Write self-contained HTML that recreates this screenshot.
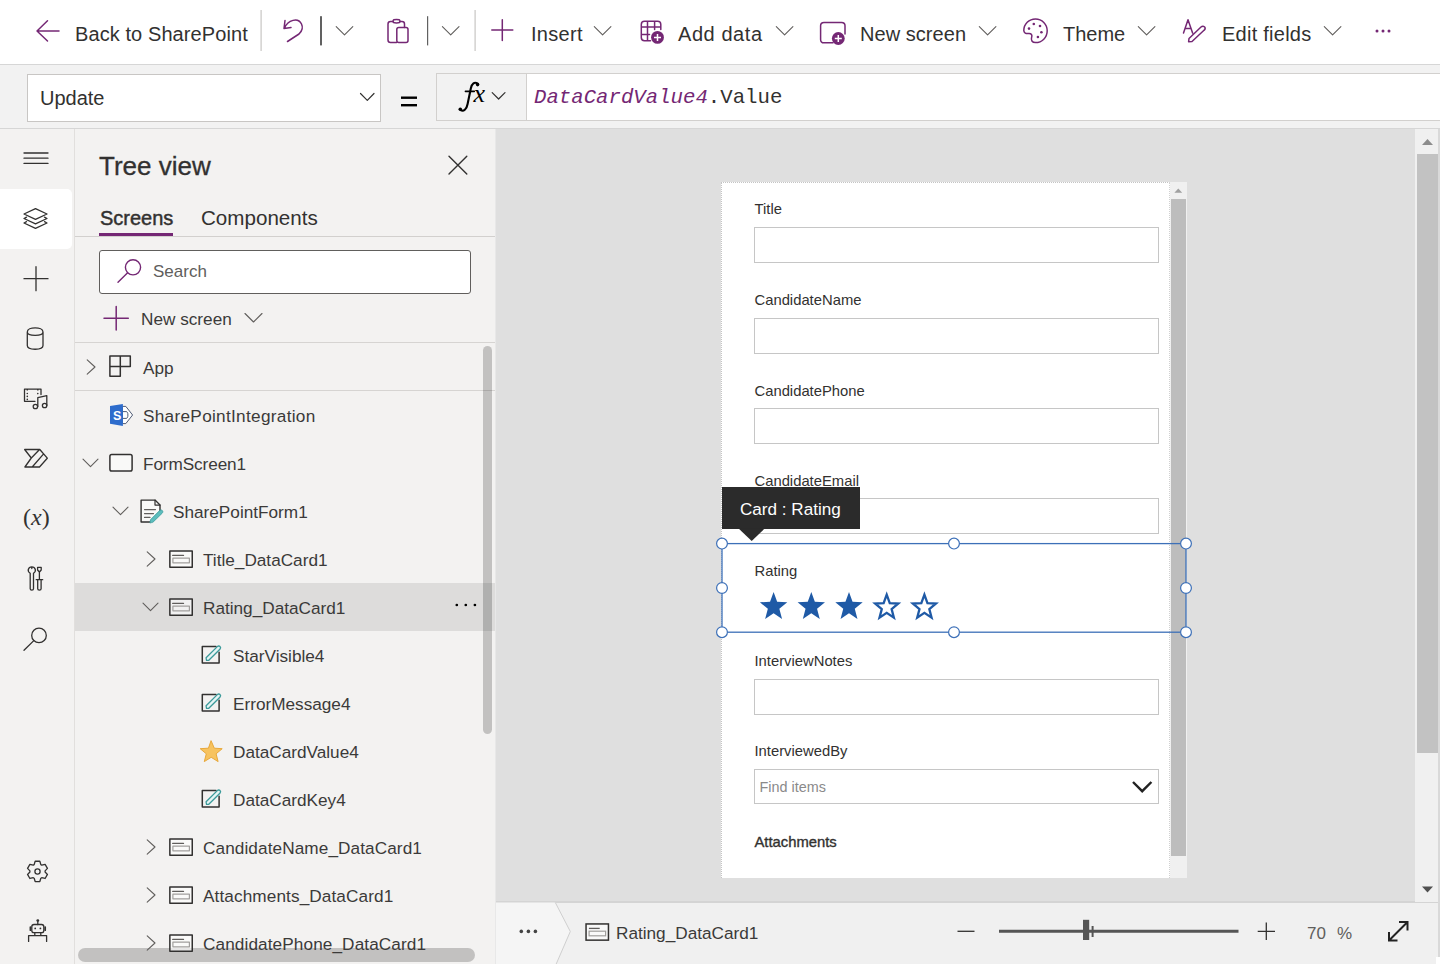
<!DOCTYPE html>
<html><head><meta charset="utf-8"><title>Power Apps</title>
<style>
*{box-sizing:border-box;margin:0;padding:0}
html,body{width:1440px;height:964px;overflow:hidden;background:#fff;font-family:"Liberation Sans",sans-serif;color:#323130}
.a{position:absolute}
.t{position:absolute;white-space:nowrap;line-height:1}
svg{position:absolute;overflow:visible}
.tb{font-size:20px;color:#323130}
.tree{font-size:17.2px;color:#3b3a39}
.lbl{font-size:14.8px;color:#323130}
.inp{position:absolute;left:754px;width:405px;height:36px;border:1px solid #c6c6c6;background:#fff}
</style></head><body>
<div class="a" style="left:0;top:0;width:1440px;height:64px;background:#fff"></div>
<div class="a" style="left:0;top:64px;width:1440px;height:1px;background:#d6d6d6"></div>
<div class="a" style="left:0;top:65px;width:1440px;height:63px;background:#f2f2f2"></div>
<div class="a" style="left:0;top:128px;width:1440px;height:1px;background:#d6d6d6"></div>
<div class="a" style="left:0;top:129px;width:75px;height:835px;background:#f3f2f1"></div>
<div class="a" style="left:74px;top:129px;width:1px;height:835px;background:#e1dfdd"></div>
<div class="a" style="left:75px;top:129px;width:420px;height:835px;background:#f3f2f1"></div>
<div class="a" style="left:495px;top:129px;width:1px;height:835px;background:#e8e8e8"></div>
<div class="a" style="left:496px;top:129px;width:944px;height:773px;background:#dfdfdf"></div>
<div class="a" style="left:496px;top:902px;width:944px;height:62px;background:#f0f0f0"></div>
<div class="a" style="left:496px;top:901px;width:944px;height:1.5px;background:#d4d4d4"></div>
<svg style="left:0;top:0" width="1440" height="64" fill="none" stroke-linecap="round" stroke-linejoin="round">
  <g stroke="#742774" stroke-width="1.5">
    <path d="M37 31 H59 M37 31 L47.5 20.8 M37 31 L47.5 41"/>
    <path d="M284 28.5 L285 20.5 M284 28.5 L291 27.5 M284.5 28 C288 20 298 17 301.5 24 C303.5 28 302 31 299 34 L287.5 41.5"/>
    <path d="M393 21.5 C393 19.5 394 19.5 396.5 19.5 C399 19.5 400 19.5 400 21.5 C400 23 399 23 396.5 23 C394 23 393 23 393 21.5 Z"/>
    <path d="M393 21.5 H390.5 C389 21.5 388 22.5 388 24 V40 C388 41.5 389 42.5 390.5 42.5 H396.5 M400 21.5 H402 C403.5 21.5 404.5 22.5 404.5 24 V27.5"/>
    <rect x="396.8" y="27.5" width="11.2" height="15" rx="2"/>
    <path d="M491.8 30 H512.8 M502.3 19.7 V40.5"/>
    <path d="M650.5 40.8 H644.5 C642.5 40.8 641.3 39.6 641.3 37.6 V24.4 C641.3 22.4 642.5 21.2 644.5 21.2 H657.6 C659.6 21.2 660.8 22.4 660.8 24.4 V29.5 M641.3 27 H660.8 M641.3 34.5 H649.5 M647.5 21.2 V40.8 M654.6 21.2 V29.5"/>
    <path d="M833 42.8 H824 C821.8 42.8 820.6 41.6 820.6 39.4 V25.8 C820.6 23.6 821.8 22.4 824 22.4 H841.6 C843.8 22.4 845 23.6 845 25.8 V34"/>
    <path d="M1035.5 19 C1029 19 1023.8 24 1023.8 30.6 C1023.8 33 1026 33.8 1028.4 33.5 C1031.5 33.2 1032.5 35 1031.6 37.6 C1030.8 40 1032 42.6 1035.5 42.6 C1042 42.6 1047.2 37.4 1047.2 30.8 C1047.2 24.2 1042 19 1035.5 19 Z"/>
    <path d="M1183.5 33 L1188 19.8 L1192.6 33 M1185.2 28.4 H1191 M1201 27 C1202.3 25.8 1204 26 1204.8 27.2 C1205.5 28.3 1205 29.5 1204 30.3 L1192 41.5 L1188.6 41.8 L1189 38.5 Z"/>
  </g>
  <g fill="#742774" stroke="none">
    <circle cx="657.5" cy="37.4" r="6.4"/>
    <circle cx="838.3" cy="38.5" r="6.4"/>
    <circle cx="1029" cy="28.6" r="1.3"/><circle cx="1033.8" cy="24" r="1.3"/><circle cx="1040" cy="26" r="1.3"/><circle cx="1041.4" cy="32.2" r="1.3"/><circle cx="1037.9" cy="37" r="1.3"/>
    <circle cx="1377" cy="31" r="1.5"/><circle cx="1383" cy="31" r="1.5"/><circle cx="1389" cy="31" r="1.5"/>
  </g>
  <g stroke="#fff" stroke-width="1.5" stroke-linecap="butt">
    <path d="M654 37.4 H661 M657.5 33.9 V40.9"/>
    <path d="M834.8 38.5 H841.8 M838.3 35 V42"/>
  </g>
  <g stroke="#605e5c" stroke-width="1.1">
    <path d="M336.2 26.6 L344.5 34.8 L352.8 26.6"/>
    <path d="M442.4 26.6 L450.7 34.8 L459 26.6"/>
    <path d="M594.3 26.6 L602.6 34.8 L610.9 26.6"/>
    <path d="M776.3 26.6 L784.6 34.8 L792.9 26.6"/>
    <path d="M979.3 26.6 L987.6 34.8 L995.9 26.6"/>
    <path d="M1138.3 26.6 L1146.6 34.8 L1154.9 26.6"/>
    <path d="M1324.3 26.6 L1332.6 34.8 L1340.9 26.6"/>
  </g>
  <rect x="260.5" y="10" width="1.2" height="41" fill="#c8c6c4" stroke="none"/>
  <rect x="320" y="16.2" width="2" height="29.2" fill="#616161" stroke="none"/>
  <rect x="427" y="16.2" width="1.2" height="29.2" fill="#616161" stroke="none"/>
  <rect x="474.5" y="10" width="1.2" height="41" fill="#c8c6c4" stroke="none"/>
</svg>
<div class="t tb" style="left:75px;top:23.5px;letter-spacing:0.09px">Back to SharePoint</div>
<div class="t tb" style="left:531px;top:23.5px;letter-spacing:0.3px">Insert</div>
<div class="t tb" style="left:678px;top:23.5px;letter-spacing:0.57px">Add data</div>
<div class="t tb" style="left:860px;top:23.5px;letter-spacing:0.05px">New screen</div>
<div class="t tb" style="left:1063px;top:23.5px;letter-spacing:0px">Theme</div>
<div class="t tb" style="left:1222px;top:23.5px;letter-spacing:0.25px">Edit fields</div>
<div class="a" style="left:27px;top:74px;width:354px;height:48px;background:#fff;border:1px solid #c8c6c4"></div>
<div class="t" style="left:40px;top:87.5px;font-size:20px;color:#323130">Update</div>
<svg style="left:0;top:65px" width="1440" height="63" fill="none" stroke-linecap="round" stroke-linejoin="round">
  <path d="M360.5 28.5 L367.3 35.3 L374 28.5" stroke="#323130" stroke-width="1.2"/>
  <rect x="401" y="31.5" width="16" height="2.4" fill="#000"/>
  <rect x="401" y="39" width="16" height="2.4" fill="#000"/>
</svg>
<div class="a" style="left:436px;top:73px;width:91px;height:48px;background:#f2f2f2;border:1px solid #d2d0ce"></div>
<div class="a" style="left:526px;top:73px;width:914px;height:48px;background:#fff;border:1px solid #d2d0ce;border-right:none"></div>
<svg style="left:0;top:0" width="1440" height="130" fill="none" stroke-linecap="round"><path d="M477.8 83.6 C474.5 81.6 471.8 83.2 470.8 88.5 L467.6 104 C466.6 109.5 463.5 111.8 460.6 110.2" stroke="#000" stroke-width="2.1"/><circle cx="477.6" cy="84.6" r="1.8" fill="#000"/><circle cx="460.3" cy="109.2" r="1.8" fill="#000"/><path d="M465.4 91.4 H474.3" stroke="#000" stroke-width="1.6"/><path d="M492.2 92.6 L498.6 99 L505 92.6" stroke="#323130" stroke-width="1.2" stroke-linejoin="round"/></svg>
<div class="t" style="left:473.5px;top:80.6px;font-family:'Liberation Serif',serif;font-style:italic;font-size:26px;color:#000">x</div>
<div class="t" style="left:534px;top:88px;font-family:'Liberation Mono',monospace;font-size:20.7px;color:#323130"><i style="color:#742774">DataCardValue4</i>.Value</div>
<div class="a" style="left:0;top:189px;width:72px;height:60px;background:#fff;border-radius:0 5px 5px 0"></div>
<svg style="left:0;top:0" width="75" height="964" fill="none" stroke="#323130" stroke-width="1.3" stroke-linecap="round" stroke-linejoin="round">
  <path d="M24 153 H48 M24 158.2 H48 M24 163.4 H48"/>
  <path d="M35.5 208.7 L47 214 L35.5 219.3 L24 214 Z"/>
  <path d="M26.5 217.2 L24 218.5 L35.5 223.8 L47 218.5 L44.5 217.2"/>
  <path d="M26.5 221.7 L24 223 L35.5 228.3 L47 223 L44.5 221.7"/>
  <path d="M24 278.7 H48 M36 266.7 V290.7"/>
  <path d="M27.3 332 C27.3 326.5 43 326.5 43 332 V345.5 C43 350.5 27.3 350.5 27.3 345.5 Z M27.3 332 C27.3 336.5 43 336.5 43 332"/>
  <path d="M35 401.3 H24.5 V389.1 H41 V394.5"/>
  <path d="M37.8 406.4 V397.6 L46.8 395.6 V405.5"/>
  <circle cx="35.4" cy="406.5" r="2.2"/><circle cx="44.6" cy="405.5" r="2.2"/>
  <g fill="#323130" stroke="none"><circle cx="27.3" cy="393.5" r="0.8"/><circle cx="27.3" cy="396.4" r="0.8"/><circle cx="27.3" cy="399.4" r="0.8"/><circle cx="37.8" cy="393.6" r="0.8"/><rect x="26.6" y="389" width="1.4" height="1.5"/><rect x="37.1" y="389" width="1.4" height="1.5"/></g>
  <path d="M24.65 449.5 H39.8 L47.3 458.2 L39.5 467 H24.9 L31.3 458 Z M31.3 458 L39.3 449.7 M32.2 467 L43.2 454.4"/>
  <path d="M30.2 573.3 C28.5 572.3 28 570.8 28.3 569.5 C28.8 567.6 30.3 566.8 31.8 566.8 C33.3 566.8 34.8 567.6 35.3 569.5 C35.6 570.8 35.1 572.3 33.5 573.3 V588.7 C33.5 590.6 30.2 590.6 30.2 588.7 Z M31.8 567 V568.6"/>
  <path d="M37.6 567.3 H41.2 V570 L39.9 571.5 H38.9 L37.6 570 Z M39.4 571.6 V579.6 M36.2 579.7 H42.7 M37.7 579.7 V588.7 C37.7 590.6 41.1 590.6 41.1 588.7 V579.7"/>
  <circle cx="39" cy="635.4" r="7.3"/>
  <path d="M33.8 640.6 L24 650.2"/>
  <path d="M34.17 864.57 L35.16 861.27 L39.84 861.27 L40.83 864.57 A7.6 7.6 0 0 1 41.75 865.10 L45.11 864.31 L47.45 868.36 L45.08 870.87 A7.6 7.6 0 0 1 45.08 871.93 L47.45 874.44 L45.11 878.49 L41.75 877.70 A7.6 7.6 0 0 1 40.83 878.23 L39.84 881.53 L35.16 881.53 L34.17 878.23 A7.6 7.6 0 0 1 33.25 877.70 L29.89 878.49 L27.55 874.44 L29.92 871.93 A7.6 7.6 0 0 1 29.92 870.87 L27.55 868.36 L29.89 864.31 L33.25 865.10 A7.6 7.6 0 0 1 34.17 864.57 Z"/>
  <circle cx="37.5" cy="871.5" r="2.6"/>
  <rect x="31.8" y="924.5" width="12" height="8.2" rx="2.2"/>
  <path d="M37.8 924.5 V921.6 M34.8 932.7 V935.6 M40.8 932.7 V935.6 M28.6 941.4 V935.6 H46.6 V941.4"/>
  <path d="M30.4 927 V930.2 M45.2 927 V930.2" stroke-width="1.7"/>
  <g fill="#323130" stroke="none"><circle cx="37.8" cy="920.6" r="1.4"/><circle cx="35.2" cy="928.4" r="0.9"/><circle cx="40.4" cy="928.4" r="0.9"/></g>
</svg>
<div class="t" style="left:23px;top:505px;font-family:'Liberation Serif',serif;font-size:24px;color:#323130">(<i>x</i>)</div>
<div class="t" style="left:99px;top:153.3px;font-size:26px;color:#323130;-webkit-text-stroke:0.3px #323130">Tree view</div>
<svg style="left:0;top:0" width="500" height="964" fill="none" stroke-linecap="round" stroke-linejoin="round">
  <path d="M449 156.3 L466.8 174 M466.8 156.3 L449 174" stroke="#323130" stroke-width="1.4"/>
</svg>
<div class="t" style="left:100px;top:208px;font-size:20px;color:#323130;-webkit-text-stroke:0.45px #323130">Screens</div>
<div class="t" style="left:201px;top:208px;font-size:20.6px;color:#323130">Components</div>
<div class="a" style="left:99px;top:232.7px;width:74px;height:3px;background:#742774"></div>
<div class="a" style="left:75px;top:236px;width:420px;height:1px;background:#d2d0ce"></div>
<div class="a" style="left:99px;top:249.5px;width:372px;height:44px;background:#fff;border:1px solid #605e5c;border-radius:3px"></div>
<div class="t" style="left:153px;top:263px;font-size:17px;color:#605e5c">Search</div>
<div class="t tree" style="left:141px;top:311px">New screen</div>
<div class="a" style="left:75px;top:342px;width:420px;height:1px;background:#d6d4d2"></div>
<div class="a" style="left:75px;top:390px;width:420px;height:1px;background:#d6d4d2"></div>
<div class="a" style="left:75px;top:583px;width:420px;height:48px;background:#dddcdb"></div>
<div class="a" style="left:483px;top:346px;width:9px;height:388px;background:rgba(0,0,0,0.2);border-radius:5px"></div>
<div class="a" style="left:78px;top:948px;width:397px;height:14px;background:rgba(0,0,0,0.2);border-radius:7px"></div>
<div class="t tree" style="left:143px;top:359.8px;letter-spacing:0px">App</div>
<div class="t tree" style="left:143px;top:407.8px;letter-spacing:0.3px">SharePointIntegration</div>
<div class="t tree" style="left:143px;top:455.8px;letter-spacing:-0.1px">FormScreen1</div>
<div class="t tree" style="left:173px;top:503.8px;letter-spacing:0px">SharePointForm1</div>
<div class="t tree" style="left:203px;top:551.8px;letter-spacing:0px">Title_DataCard1</div>
<div class="t tree" style="left:203px;top:599.8px;letter-spacing:0px">Rating_DataCard1</div>
<div class="t tree" style="left:233px;top:647.8px;letter-spacing:0px">StarVisible4</div>
<div class="t tree" style="left:233px;top:695.8px;letter-spacing:0px">ErrorMessage4</div>
<div class="t tree" style="left:233px;top:743.8px;letter-spacing:0px">DataCardValue4</div>
<div class="t tree" style="left:233px;top:791.8px;letter-spacing:0px">DataCardKey4</div>
<div class="t tree" style="left:203px;top:839.8px;letter-spacing:0.09px">CandidateName_DataCard1</div>
<div class="t tree" style="left:203px;top:887.8px;letter-spacing:0.1px">Attachments_DataCard1</div>
<div class="t tree" style="left:203px;top:935.8px;letter-spacing:0.1px">CandidatePhone_DataCard1</div>
<svg style="left:0;top:0" width="500" height="964" fill="none" stroke-linecap="round" stroke-linejoin="round">
<circle cx="133" cy="267.3" r="7.6" stroke="#742774" stroke-width="1.4"/><path d="M127.6 272.7 L118 282.2" stroke="#742774" stroke-width="1.4"/>
<path d="M104 318.3 H128.3 M116.2 306.5 V330" stroke="#742774" stroke-width="1.5"/>
<path d="M245 313.5 L253.5 322 L262 313.5" stroke="#605e5c" stroke-width="1.1"/>
<path d="M87.2 359.8 L95.0 367 L87.2 374.2" stroke="#605e5c" stroke-width="1.1"/>
<path d="M83 459.2 L90.5 466.7 L98 459.2" stroke="#605e5c" stroke-width="1.1"/>
<path d="M113 507.2 L120.5 514.7 L128 507.2" stroke="#605e5c" stroke-width="1.1"/>
<path d="M147.2 551.8 L155.0 559 L147.2 566.2" stroke="#605e5c" stroke-width="1.1"/>
<path d="M143 603.2 L150.5 610.7 L158 603.2" stroke="#605e5c" stroke-width="1.1"/>
<path d="M147.2 839.8 L155.0 847 L147.2 854.2" stroke="#605e5c" stroke-width="1.1"/>
<path d="M147.2 887.8 L155.0 895 L147.2 902.2" stroke="#605e5c" stroke-width="1.1"/>
<path d="M147.2 935.8 L155.0 943 L147.2 950.2" stroke="#605e5c" stroke-width="1.1"/>
<path d="M109.9 356.1 H130.3 V366.5 H109.9 Z M120.3 356.1 V376.3 H109.9 V366.5" stroke="#323130" stroke-width="1.5"/>
<path d="M122.9 406.4 H125.8 L132.6 415 L125.8 423.6 H122.9 Z" stroke="#3c4a66" stroke-width="0.9" fill="#fff"/><path d="M122.9 411.6 H126 C127.5 411.6 127.9 413 127.9 415 C127.9 417 127.5 418.4 126 418.4 H122.9" stroke="#3c4a66" stroke-width="0.9"/>
<path d="M110 406.1 L122.9 404 V425.9 L110 423.8 Z" fill="#2d6ccc" stroke="none"/>
<text x="112.9" y="419.6" font-family="Liberation Sans" font-weight="bold" font-size="12.5" fill="#fff" stroke="none">S</text>
<rect x="109.9" y="454.6" width="22.2" height="16.5" rx="1.8" stroke="#323130" stroke-width="1.5" fill="#fff" fill-opacity="0.5"/>
<path d="M150 522 H141.1 V500.1 H155 L160 505.1 V511" stroke="#323130" stroke-width="1.4" fill="#fff" fill-opacity="0.5"/><path d="M155 500.1 V505.1 H160" stroke="#323130" stroke-width="1.2"/>
<path d="M144.5 509.6 H155.5 M144.5 513.6 H153.5 M144.5 517.4 H150" stroke="#605e5c" stroke-width="1.2"/>
<path d="M150 522.6 L150.6 519.6 L159.6 510.6 C160.4 509.8 161.6 509.8 162.3 510.5 C163 511.2 163 512.4 162.2 513.2 L153.2 522 Z" fill="#5cbdbd" stroke="#3a9c9c" stroke-width="0.8"/>
<rect x="169.85" y="550.95" width="22.4" height="16.2" stroke="#323130" stroke-width="1.5" fill="#fff" fill-opacity="0.6"/>
  <path d="M172.7 555.4000000000001 H183.5" stroke="#605e5c" stroke-width="1.3"/>
  <rect x="172.9" y="558.2" width="16.5" height="4.6" stroke="#a19f9d" stroke-width="1.2" fill="none"/>
<rect x="169.85" y="598.95" width="22.4" height="16.2" stroke="#323130" stroke-width="1.5" fill="#fff" fill-opacity="0.6"/>
  <path d="M172.7 603.4000000000001 H183.5" stroke="#605e5c" stroke-width="1.3"/>
  <rect x="172.9" y="606.2" width="16.5" height="4.6" stroke="#a19f9d" stroke-width="1.2" fill="none"/>
<rect x="169.85" y="838.95" width="22.4" height="16.2" stroke="#323130" stroke-width="1.5" fill="#fff" fill-opacity="0.6"/>
  <path d="M172.7 843.4000000000001 H183.5" stroke="#605e5c" stroke-width="1.3"/>
  <rect x="172.9" y="846.2" width="16.5" height="4.6" stroke="#a19f9d" stroke-width="1.2" fill="none"/>
<rect x="169.85" y="886.95" width="22.4" height="16.2" stroke="#323130" stroke-width="1.5" fill="#fff" fill-opacity="0.6"/>
  <path d="M172.7 891.4000000000001 H183.5" stroke="#605e5c" stroke-width="1.3"/>
  <rect x="172.9" y="894.2" width="16.5" height="4.6" stroke="#a19f9d" stroke-width="1.2" fill="none"/>
<rect x="169.85" y="934.95" width="22.4" height="16.2" stroke="#323130" stroke-width="1.5" fill="#fff" fill-opacity="0.6"/>
  <path d="M172.7 939.4000000000001 H183.5" stroke="#605e5c" stroke-width="1.3"/>
  <rect x="172.9" y="942.2" width="16.5" height="4.6" stroke="#a19f9d" stroke-width="1.2" fill="none"/>
<path d="M216.0 646.5 H202.3 V662.9 H219.1 V652.3" stroke="#323130" stroke-width="1.5" fill="none"/>
  <path d="M206.5 660.3 L206.1 657.8 L217.3 646.5999999999999 C218.1 645.8 219.3 645.8 220.0 646.5 C220.7 647.1999999999999 220.7 648.4 219.9 649.1999999999999 L208.8 660.3 Z" stroke="#3b9a9a" stroke-width="1.3" fill="#e6f4f4"/>
<path d="M216.0 694.5 H202.3 V710.9 H219.1 V700.3" stroke="#323130" stroke-width="1.5" fill="none"/>
  <path d="M206.5 708.3 L206.1 705.8 L217.3 694.5999999999999 C218.1 693.8 219.3 693.8 220.0 694.5 C220.7 695.1999999999999 220.7 696.4 219.9 697.1999999999999 L208.8 708.3 Z" stroke="#3b9a9a" stroke-width="1.3" fill="#e6f4f4"/>
<path d="M216.0 790.5 H202.3 V806.9 H219.1 V796.3" stroke="#323130" stroke-width="1.5" fill="none"/>
  <path d="M206.5 804.3 L206.1 801.8 L217.3 790.5999999999999 C218.1 789.8 219.3 789.8 220.0 790.5 C220.7 791.1999999999999 220.7 792.4 219.9 793.1999999999999 L208.8 804.3 Z" stroke="#3b9a9a" stroke-width="1.3" fill="#e6f4f4"/>
<path d="M211.2 741 L214.3 748.2 L222.2 748.7 L216.1 753.8 L218.1 761.6 L211.2 757.3 L204.3 761.6 L206.3 753.8 L200.2 748.7 L208.1 748.2 Z" fill="#f7c35f" stroke="#e8a83a" stroke-width="1"/>
<g fill="#000" stroke="none"><circle cx="456.8" cy="605" r="1.35"/><circle cx="465.8" cy="605" r="1.35"/><circle cx="474.9" cy="605" r="1.35"/></g>
</svg>
<div class="a" style="left:721px;top:182px;width:449px;height:696px;background:#fff;border-top:1px dotted #c4c4c4;border-left:1px dotted #c4c4c4;border-right:1px dotted #d0d0d0"></div>
<div class="a" style="left:1170px;top:182px;width:17px;height:696px;background:#f0f0f0"></div>
<div class="a" style="left:1171px;top:199px;width:15px;height:657px;background:#bdbdbd"></div>
<svg style="left:0;top:0" width="1440" height="964"><path d="M1174.4 192.8 L1178.3 188.6 L1182.2 192.8 Z" fill="#a0a0a0"/></svg>
<div class="t lbl" style="left:754.5px;top:201.93px">Title</div>
<div class="t lbl" style="left:754.5px;top:293.43px">CandidateName</div>
<div class="t lbl" style="left:754.5px;top:383.63px">CandidatePhone</div>
<div class="t lbl" style="left:754.5px;top:473.83px">CandidateEmail</div>
<div class="t lbl" style="left:754.5px;top:564.03px">Rating</div>
<div class="t lbl" style="left:754.5px;top:654.23px">InterviewNotes</div>
<div class="t lbl" style="left:754.5px;top:744.43px">InterviewedBy</div>
<div class="t lbl" style="left:754.5px;top:834.53px;-webkit-text-stroke:0.35px #323130">Attachments</div>
<div class="inp" style="top:227.2px"></div>
<div class="inp" style="top:317.6px"></div>
<div class="inp" style="top:408px"></div>
<div class="inp" style="top:498.2px"></div>
<div class="inp" style="top:678.7px"></div>
<div class="inp" style="top:769.2px;height:35.2px"></div>
<div class="t" style="left:759.5px;top:780px;font-size:14.4px;color:#8a8a8a">Find items</div>
<svg style="left:0;top:0" width="1440" height="964" fill="none"><path d="M1133 782 L1142.2 791.2 L1151.4 782" stroke="#222" stroke-width="2.4"/></svg>
<div class="a" style="left:722px;top:487.3px;width:138px;height:41.3px;background:#2b2b2b"></div>
<svg style="left:0;top:0" width="1440" height="964"><path d="M738.6 528.5 L764.7 528.5 L751.7 541 Z" fill="#2b2b2b"/></svg>
<div class="t" style="left:740px;top:500.5px;font-size:17.1px;color:#fff">Card : Rating</div>
<svg style="left:0;top:0" width="1440" height="964" fill="none">
<rect x="722" y="543.6" width="464" height="88.6" stroke="#3d70b8" stroke-width="1.3"/>
<circle cx="722" cy="543.6" r="5.4" fill="#fff" stroke="#3d70b8" stroke-width="1.2"/>
<circle cx="954" cy="543.6" r="5.4" fill="#fff" stroke="#3d70b8" stroke-width="1.2"/>
<circle cx="1186" cy="543.6" r="5.4" fill="#fff" stroke="#3d70b8" stroke-width="1.2"/>
<circle cx="722" cy="588" r="5.4" fill="#fff" stroke="#3d70b8" stroke-width="1.2"/>
<circle cx="1186" cy="588" r="5.4" fill="#fff" stroke="#3d70b8" stroke-width="1.2"/>
<circle cx="722" cy="632.2" r="5.4" fill="#fff" stroke="#3d70b8" stroke-width="1.2"/>
<circle cx="954" cy="632.2" r="5.4" fill="#fff" stroke="#3d70b8" stroke-width="1.2"/>
<circle cx="1186" cy="632.2" r="5.4" fill="#fff" stroke="#3d70b8" stroke-width="1.2"/>
<polygon points="773.60,591.90 777.15,601.80 787.30,602.26 779.35,608.85 782.06,619.04 773.60,613.20 765.14,619.04 767.85,608.85 759.90,602.26 770.05,601.80" fill="#1f5aa6"/>
<polygon points="811.30,591.90 814.85,601.80 825.00,602.26 817.05,608.85 819.76,619.04 811.30,613.20 802.84,619.04 805.55,608.85 797.60,602.26 807.75,601.80" fill="#1f5aa6"/>
<polygon points="849.00,591.90 852.55,601.80 862.70,602.26 854.75,608.85 857.46,619.04 849.00,613.20 840.54,619.04 843.25,608.85 835.30,602.26 845.45,601.80" fill="#1f5aa6"/>
<polygon points="886.70,594.70 889.75,603.03 898.30,603.48 891.63,609.07 893.87,617.67 886.70,612.80 879.53,617.67 881.77,609.07 875.10,603.48 883.65,603.03" fill="#fff" stroke="#1f5aa6" stroke-width="2.3" stroke-linejoin="miter"/>
<polygon points="924.40,594.70 927.45,603.03 936.00,603.48 929.33,609.07 931.57,617.67 924.40,612.80 917.23,617.67 919.47,609.07 912.80,603.48 921.35,603.03" fill="#fff" stroke="#1f5aa6" stroke-width="2.3" stroke-linejoin="miter"/>
</svg>
<div class="a" style="left:1415px;top:129px;width:23px;height:773px;background:#f0f0f0"></div>
<div class="a" style="left:1417px;top:154px;width:21px;height:598.5px;background:#c2c2c2"></div>
<svg style="left:0;top:0" width="1440" height="964"><path d="M1422 145 L1427.5 139 L1433 145 Z" fill="#8c8c8c"/><path d="M1422 886.5 L1427.5 892.5 L1433 886.5 Z" fill="#505050"/></svg>
<div class="a" style="left:1438px;top:129px;width:2px;height:828px;background:#d9d9d9"></div>
<div class="a" style="left:1436px;top:957px;width:4px;height:7px;background:#fff"></div>
<svg style="left:0;top:0" width="1440" height="964" fill="none"><path d="M496 902.5 H555.3 L570.3 931.5 L556.2 964 H496 Z" fill="#f5f5f5"/><path d="M555.3 902.5 L570.3 931.5 L556.2 964" stroke="#cfcfcf" stroke-width="1"/><g fill="#444"><circle cx="521.3" cy="931.4" r="1.8"/><circle cx="528.4" cy="931.4" r="1.8"/><circle cx="535.4" cy="931.4" r="1.8"/></g><rect x="586.05" y="923.95" width="22.4" height="16.2" stroke="#323130" stroke-width="1.5" fill="#fff" fill-opacity="0.6"/>
  <path d="M588.9 928.4000000000001 H599.6999999999999" stroke="#605e5c" stroke-width="1.3"/>
  <rect x="589.0999999999999" y="931.2" width="16.5" height="4.6" stroke="#a19f9d" stroke-width="1.2" fill="none"/><path d="M957.5 931.3 H974.5" stroke="#323130" stroke-width="1.3"/><path d="M999 931.2 H1238.5" stroke="#555" stroke-width="3"/><rect x="1083" y="919.8" width="6.2" height="20.2" fill="#555"/><path d="M1092.6 926 V937" stroke="#555" stroke-width="2"/><path d="M1257.7 931.3 H1275 M1266.3 922.6 V940" stroke="#323130" stroke-width="1.3"/><path d="M1389 940.5 L1407.5 922 M1389 932 V940.5 H1397.5 M1399 922 H1407.5 V930.5" stroke="#222" stroke-width="2"/></svg>
<div class="t tree" style="left:616px;top:925px">Rating_DataCard1</div>
<div class="t" style="left:1307px;top:924.5px;font-size:17px;color:#605e5c">70</div>
<div class="t" style="left:1337px;top:924.5px;font-size:17px;color:#605e5c">%</div>
</body></html>
